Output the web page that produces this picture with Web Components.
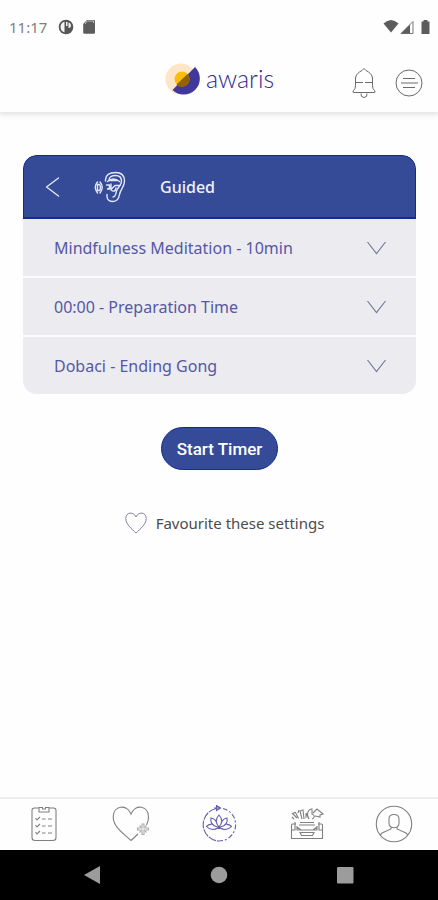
<!DOCTYPE html>
<html lang="en">
<head>
<meta charset="utf-8">
<meta name="viewport" content="width=device-width, initial-scale=1">
<title>Awaris – Guided timer</title>
<style>
  html, body { margin: 0; }
  body { background: #fefefe; font-family: "Noto Sans", "Open Sans", sans-serif; }
</style>
</head>
<body>
<awaris-app></awaris-app>
<script>
const define = (name, html) => {
  const template = document.createElement('template');
  template.innerHTML = html;
  customElements.define(name, class extends HTMLElement {
    constructor() {
      super();
      this.attachShadow({ mode: 'open' }).append(template.content.cloneNode(true));
    }
  });
};

define('status-bar', `
  <style>
    :host { display: flex; align-items: center; height: 54px; padding: 0 7px 0 9px; color: #808080; font-size: 15px; line-height: 20px; }
    svg { display: block; }
    .left { margin-left: 10px; margin-right: auto; }
  </style>
  <time>11:17</time>
  <svg class="left" width="40" height="16" viewBox="0 0 40 16" aria-hidden="true">
    <circle cx="9" cy="8" r="7.3" fill="#555"/>
    <path d="M7.500 2.500Q3.500 4 3.500 8t4 5.500zM9 3h1.500v4H9zM11.500 3.500q2.500.5 2.500 3t-2.500 2.500z" fill="#f3f3f3"/>
    <path d="M30 1h6.700q1.300 0 1.300 1.300v11.200q0 1.300-1.300 1.300H27.500q-1.300 0-1.300-1.300V5z" fill="#5c5c5c"/>
    <path d="M28.500 5V4l2-2h6v2" stroke="#bbb" fill="none"/>
  </svg>
  <svg width="48" height="16" viewBox="0 0 48 16" aria-hidden="true">
    <path d="M0.500 4.500Q8-2.500 15.500 4.500L8 13.500z" fill="#5c5c5c"/>
    <path d="M18 14.500L30 2.500v12z" fill="#fff" stroke="#777"/>
    <path d="M18 14.500l9-9v9z" fill="#5c5c5c"/>
    <path d="M40.500 1h4v1.500h2V15h-8V2.500h2z" fill="#5c5c5c"/>
  </svg>
`);

define('app-header', `
  <style>
    :host { display: grid; grid-template-columns: 1fr auto 1fr; height: 58px; background: #fefefe; box-shadow: 0 2px 3px #e6e6e6, 0 5px 4px #f5f5f5; }
    .brand { grid-column: 2; display: flex; gap: 6px; height: 50px; align-items: center; color: #342a91; text-decoration: none; font: 300 25px/28px Lato, sans-serif; }
    .brand span { padding-bottom: 2px; }
    .actions { display: flex; justify-content: flex-end; gap: 19px; height: 58px; align-items: center; padding-right: 15px; }
    button { all: unset; cursor: pointer; display: block; }
    svg { display: block; fill: none; stroke: #6b6b6b; }
  </style>
  <a class="brand" href="#home">
    <svg width="36" height="34" viewBox="0 0 36 34" style="stroke:none" aria-hidden="true">
      <circle cx="17" cy="17" r="15.500" fill="#fde6c8"/>
      <path d="M8.500 28A16 16 0 0 0 31 5z" fill="#40389a"/>
      <circle cx="18" cy="17" r="7.500" fill="#f9be0b"/>
      <path d="M12.500 22.500A7.500 7.500 0 0 0 23.500 12z" fill="#946200"/>
    </svg>
    <span>awaris</span>
  </a>
  <div class="actions">
    <button aria-label="Notifications">
      <svg width="24" height="32" viewBox="0 0 24 32">
        <path d="M12 1.500Q10.500 3.500 7.500 5 3.500 7.500 3.500 11v7.500Q3.500 22 1.500 23.500q-1.500 2 .5 2h20q2 0 .5-2-2-1.500-2-5V11q0-3.500-4-6-3-1.500-4.500-3.500zM3.500 15.500H11m2 0h7.500M9 26.500q-.5 4 3 4t3-4"/>
      </svg>
    </button>
    <button aria-label="Menu">
      <svg width="28" height="28" viewBox="0 0 28 28">
        <circle cx="14" cy="14" r="13"/><path d="M8 9.500h12M6 14h17M8 18.500h12"/>
      </svg>
    </button>
  </div>
`);

define('option-row', `
  <style>
    :host { display: block; background: #ecebf0; }
    button { all: unset; box-sizing: border-box; width: 100%; min-height: 57px; padding: 0 30px 0 31px; display: flex; align-items: center; justify-content: space-between; cursor: pointer; color: #5558a4; font-size: 16px; line-height: 24px; }
    svg { display: block; fill: none; stroke: #747898; stroke-width: 1.200; }
  </style>
  <button aria-expanded="false"><slot></slot>
    <svg width="19" height="14" viewBox="0 0 19 14" aria-hidden="true"><path d="M.5 1l9 11.500 9-11.500"/></svg>
  </button>
`);

define('timer-card', `
  <style>
    :host { display: flex; flex-direction: column; gap: 2px; border-radius: 14px; overflow: hidden; background: #fbfbfc; }
    header { display: flex; align-items: center; height: 64px; background: #354b98; border: solid #132c8c; border-width: 1px 1px 2px; border-radius: 14px 14px 0 0; box-sizing: border-box; color: #f1f2fa; padding-left: 21px; margin-bottom: -2px; }
    h1 { margin: 0 0 0 33px; font-size: 16px; line-height: 24px; font-weight: 500; }
    button { all: unset; cursor: pointer; margin-right: 34px; }
    svg { display: block; fill: none; stroke: #e4e8f8; stroke-width: 1.400; stroke-linecap: round; stroke-linejoin: round; }
  </style>
  <header>
    <button aria-label="Back"><svg width="15" height="20" viewBox="0 0 15 20"><path d="M13.500 1L1.500 10l12 9"/></svg></button>
    <svg width="33" height="32" viewBox="0 0 33 32" aria-hidden="true">
      <path d="M11.500 10V8.500C12 4 16 1.500 21.500 1.500S30.500 4.500 30.500 10c0 6-4 8-5 13.500-.7 4.500-3 7-6.500 7-3.500 0-6-2-6-5v-2"/>
      <path d="M15 9c0-3 3-4.500 6.500-4.500s6 2 6 5.500c0 5-4 6-5 10-.6 3.500-1.500 6-3.500 6"/>
      <path d="M13.500 10.500q6-5 12 0M16 9.500h7M14 17.500h4l3-3h5M17 13v6q4 3 5-2M12.500 14h3v4h-2"/>
      <path d="M3.500 11q-4.500 5 0 11M3.500 13.500h2q2 3 0 6h-2zM6 11q4.500 5 0 11"/>
    </svg>
    <h1><slot name="title"></slot></h1>
  </header>
  <slot></slot>
`);

define('start-button', `
  <style>
    :host { display: block; }
    button { display: block; cursor: pointer; border: 1px solid #122b8c; border-radius: 22px; background: #354b98; color: #fff; padding: 10px 15px 9px; font: 500 17px/22px Roboto, sans-serif; }
  </style>
  <button><slot></slot></button>
`);

define('favourite-toggle', `
  <style>
    :host { display: block; }
    button { all: unset; cursor: pointer; display: flex; align-items: center; gap: 9px; color: #4c4c4c; font-size: 15px; line-height: 22px; }
    svg { display: block; fill: none; stroke: #85859a; }
  </style>
  <button aria-pressed="false">
    <svg width="22" height="22" viewBox="0 0 22 22" aria-hidden="true"><path d="M11 21C7 17 .8 12.500.8 6.500.8 0 8.500-.8 11 5c2.500-5.800 10.200-5 10.200 1.500C21.200 12.500 15 17 11 21z"/></svg>
    <slot></slot>
  </button>
`);

define('tab-bar', `
  <style>
    :host { display: block; border-top: 2px solid #eee; }
    nav { display: grid; box-sizing: border-box; grid-template-columns: repeat(5, 1fr); height: 51px; padding-bottom: 2px; align-items: center; justify-items: center; }
    a { display: block; color: #808080; }
    a[aria-current] { color: #625db0; }
    svg { display: block; fill: none; stroke: currentColor; stroke-width: 1.100; }
  </style>
  <nav aria-label="Main">
    <a href="#programs" aria-label="Programs">
      <svg width="26" height="36" viewBox="0 0 26 36"><path d="M8 2H3.500Q1 2 1 4.500v27Q1 34.500 4 34.500h18q3 0 3-3v-27Q25 2 22.500 2H18M8 1.500V6h10V1.500h-3.500V3h-3V1.500z"/><path d="M4.500 12l1.500 2 3-3M4.500 19l1.500 2 3-3M4.500 26l1.500 2 3-3"/><path d="M11 13h3.500m2.500 0h4M11 20h3.500m2.500 0h4M11 27h3.500m2.500 0h4"/></svg>
    </a>
    <a href="#favourites" aria-label="Favourites">
      <svg width="38" height="36" viewBox="0 0 38 36"><path d="M19 34.500C12 28 1.200 21 1.200 11 1.200-.5 15-2.500 19 8c4-10.500 17.500-8.500 17.500 3 0 3-.8 5.500-2 8M19 34.500l7-6.500"/><path d="M30 18h2v4h4.500v2H32v4.500h-2V24h-4.500v-2H30z" stroke="#aaa"/><path d="M27.500 19.500l1.500 1.500M34.500 19.500L33 21M27.500 26.500l1.500-1.500M34.500 26.500L33 25" stroke="#aaa"/></svg>
    </a>
    <a href="#timer" aria-label="Timer" aria-current="page">
      <svg width="38" height="38" viewBox="0 0 38 38"><path d="M16 3.500A16.500 16.500 0 0 0 18 36" stroke-dasharray="8 1"/><path d="M18 36A16.500 16.500 0 0 0 23 3.500" stroke-dasharray="5 2 2 2"/><path d="M16.500.5L20.500 3l-4 2.500zM14 3h7"/><path d="M19 22q-5.500-6 0-12 5.500 6 0 12zM17.500 22q-8-2-6.500-9 4.500 1 5.500 4.500M20.500 22q8-2 6.500-9-4.500 1-5.500 4.500M18 23Q11 26.500 6.500 21.500q2.500-2.500 5-2M20 23q7 3.500 11.500-1.500-2.500-2.500-5-2"/><circle cx="19" cy="22.500" r="1.200" fill="currentColor"/></svg>
    </a>
    <a href="#toolbox" aria-label="Toolbox">
      <svg width="34" height="34" viewBox="0 0 34 34"><path d="M10 15.500h14M9 18h16M6 17H2.500Q1.500 17 1.500 18v13.500h31V18q0-1-1-1H28M5 15v8H1.500M29 15v8h3.500M7 19v4h20v-4M7 20l4 3M27 20l-4 3M10 25.500l1.500 3h11l1.500-3z"/><path d="M7 11L2.500 6.500l3-1 3 6M8 6l1-3M12 12l-2-8 3-1 1 9M16 11V6l3 6M19 11c-3-3-1-9 3-9v5c3 1 3 4 0 5M23 6l4-4 6 5-3 1v2l-5-1M4 12l-2-2"/></svg>
    </a>
    <a href="#profile" aria-label="Profile">
      <svg width="38" height="38" viewBox="0 0 38 38"><circle cx="19" cy="19" r="17.700"/><path d="M14 14q0-4.500 5-4.500t5 4.500v4.500q0 2-2 3.500v2l9 4q1.500 1 1.500 2.500M14 14v4.500q0 2 2 3.500v2l-9 4q-1.500 1-1.500 2.500M16 22q3 1.500 6 0"/></svg>
    </a>
  </nav>
`);

define('system-nav', `
  <style>
    :host { display: grid; grid-template-columns: repeat(3, 126px); justify-content: center; justify-items: center; align-items: center; height: 50px; background: #000; }
    button { all: unset; cursor: pointer; }
    svg { display: block; fill: #9c9c9c; }
  </style>
  <button aria-label="Back"><svg width="18" height="20" viewBox="0 0 18 20"><path d="M0 10L16 1v18z"/></svg></button>
  <button aria-label="Home"><svg width="18" height="18" viewBox="0 0 18 18"><circle cx="9" cy="9" r="8.300"/></svg></button>
  <button aria-label="Recent apps"><svg width="18" height="18" viewBox="0 0 18 18"><rect x="1" y="1" width="16.500" height="16.500" rx="1"/></svg></button>
`);

define('awaris-app', `
  <style>
    :host { display: flex; flex-direction: column; min-height: 100vh; }
    main { flex: 1; display: flex; flex-direction: column; align-items: center; padding: 43px 22px 24px 23px; }
    timer-card { align-self: stretch; }
    start-button { margin-top: 33px; }
    favourite-toggle { margin: 42px 0 0 10px; }
  </style>
  <status-bar></status-bar>
  <app-header></app-header>
  <main>
    <timer-card>
      <span slot="title">Guided</span>
      <option-row>Mindfulness Meditation - 10min</option-row>
      <option-row>00:00 - Preparation Time</option-row>
      <option-row>Dobaci - Ending Gong</option-row>
    </timer-card>
    <start-button>Start Timer</start-button>
    <favourite-toggle>Favourite these settings</favourite-toggle>
  </main>
  <tab-bar></tab-bar>
  <system-nav></system-nav>
`);
</script>
</body>
</html>
